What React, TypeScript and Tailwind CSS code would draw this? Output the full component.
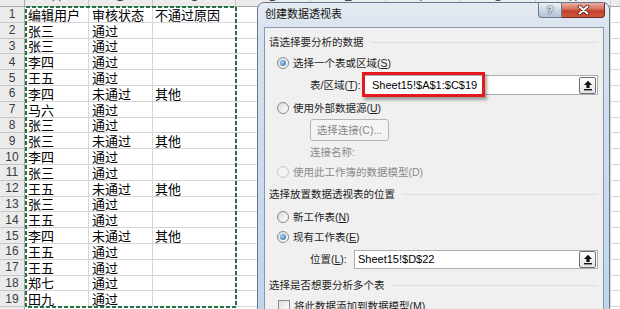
import React from 'react';

const rows: [string, string, string][] = [
  ['编辑用户', '审核状态', '不通过原因'],
  ['张三', '通过', ''],
  ['张三', '通过', ''],
  ['李四', '通过', ''],
  ['王五', '通过', ''],
  ['李四', '未通过', '其他'],
  ['马六', '通过', ''],
  ['张三', '通过', ''],
  ['张三', '未通过', '其他'],
  ['李四', '通过', ''],
  ['张三', '通过', ''],
  ['王五', '未通过', '其他'],
  ['张三', '通过', ''],
  ['王五', '通过', ''],
  ['李四', '未通过', '其他'],
  ['王五', '通过', ''],
  ['王五', '通过', ''],
  ['郑七', '通过', ''],
  ['田九', '通过', ''],
];

const extraCols = ['D', 'E', 'F', 'G', 'H', 'I'];

function Radio({ checked, disabled }: { checked?: boolean; disabled?: boolean }) {
  return (
    <span
      className={`w-[12px] h-[12px] shrink-0 rounded-full border flex items-center justify-center ${
        disabled
          ? 'border-[#c4c4c4] bg-[#f4f4f4]'
          : 'border-[#8a8a8a] bg-[linear-gradient(135deg,#d9d9d9,#ffffff)]'
      }`}
    >
      {checked && (
        <span className="w-[6px] h-[6px] rounded-full bg-[radial-gradient(circle_at_35%_35%,#a9d0f5,#2b5fa5)]" />
      )}
    </span>
  );
}

function Heading({ text, h }: { text: string; h: string }) {
  return (
    <div className={`flex items-center pl-[4px] pr-[5px] ${h}`}>
      <span className="text-[#1e1e1e]">{text}</span>
      <div className="flex-1 h-px bg-[#d5dfe6] ml-[7px]" />
    </div>
  );
}

function Mn({ k }: { k: string }) {
  return (
    <>
      (<span className="underline underline-offset-[1px]">{k}</span>)
    </>
  );
}

function PickButton() {
  return (
    <div className="w-[17px] h-[17px] rounded-[2px] border border-[#6f6f6f] bg-[linear-gradient(180deg,#ffffff,#e3e3e3)] flex items-center justify-center">
      <svg width="10" height="11" viewBox="0 0 10 11">
        <path d="M5 0.8 L9 5 H6.6 V8 H3.4 V5 H1 Z" fill="#111" />
        <rect x="1" y="9" width="8" height="1.4" fill="#111" />
      </svg>
    </div>
  );
}

function Dialog() {
  return (
    <div className="absolute left-[257px] top-[2px] w-[353px] h-[330px] rounded-t-[7px] border border-[#66778b] bg-[linear-gradient(180deg,#e5ebf2_0px,#d6e2ef_30px,#bed4ec_100%)] pl-[6px] pr-[5px] flex flex-col [font-family:'Liberation_Sans','Noto_Sans_CJK_SC',sans-serif]">
      {/* title bar */}
      <div className="h-[24px] flex items-start mr-[-1px]">
        <span className="pt-[4px] pl-[1px] text-[11px] leading-[14px] text-[#111]">创建数据透视表</span>
        <div className="ml-auto flex">
          <div className="w-[24px] h-[15px] rounded-bl-[4px] border border-t-0 border-[#6b7b8d] bg-[linear-gradient(180deg,#eef2f7,#c9d5e3_55%,#b3c3d6)] flex items-center justify-center text-[11px] leading-none font-bold text-white [text-shadow:0_0_1px_#34465a,0_0_1px_#34465a,0_0_2px_#34465a]">
            ?
          </div>
          <div className="w-[43px] h-[15px] rounded-br-[4px] border border-t-0 border-l-0 border-[#6a2a22] bg-[linear-gradient(180deg,#eab0a3,#d56e5b_45%,#c2402b_55%,#d2583d)] flex items-center justify-center">
            <svg width="13" height="10" viewBox="0 0 13 10">
              <path d="M2.5 1.5 L10.5 8.5 M10.5 1.5 L2.5 8.5" stroke="#4a1b15" strokeWidth="3.6" strokeLinecap="round" />
              <path d="M2.5 1.5 L10.5 8.5 M10.5 1.5 L2.5 8.5" stroke="#ffffff" strokeWidth="2" strokeLinecap="round" />
            </svg>
          </div>
        </div>
      </div>

      {/* client area */}
      <div className="flex-1 border border-b-0 border-[#8798ad] bg-[#f0f0f0] pt-[4px] text-[10.5px] leading-[14px] text-[#1e1e1e]">
        <Heading text="请选择要分析的数据" h="h-[20px]" />

        <div className="h-[22px] flex items-center gap-[4px] pl-[12px]">
          <Radio checked />
          <span>
            选择一个表或区域<Mn k="S" />
          </span>
        </div>

        <div className="relative h-[22px] flex items-center pl-[45px] pr-[5px]">
          <span className="w-[54px] shrink-0">
            表/区域<Mn k="T" />:
          </span>
          <div className="flex-1 h-[20px] border border-[#abadb3] bg-white flex items-center pl-[7px] pr-[1px]">
            <span className="text-[11px] text-black">Sheet15!$A$1:$C$19</span>
            <div className="ml-auto">
              <PickButton />
            </div>
          </div>
          <div className="absolute left-[97px] top-[-2px] w-[123px] h-[25px] border-[3px] border-[#e3191b] shadow-[2px_3px_3px_rgba(0,0,0,0.35)]" />
        </div>

        <div className="h-[23px] flex items-center gap-[4px] pl-[12px]">
          <Radio />
          <span>
            使用外部数据源<Mn k="U" />
          </span>
        </div>

        <div className="h-[22px] flex items-center pl-[45px]">
          <div className="w-[79px] h-[22px] rounded-[3px] border border-[#b3b6b9] bg-[#f4f4f4] flex items-center justify-center text-[#878787]">
            选择连接(C)...
          </div>
        </div>

        <div className="h-[21px] flex items-center pl-[45px] text-[#8a8a8a]">连接名称:</div>

        <div className="h-[19px] flex items-center gap-[4px] pl-[12px] text-[#8a8a8a]">
          <Radio disabled />
          <span>使用此工作簿的数据模型(D)</span>
        </div>

        <Heading text="选择放置数据透视表的位置" h="h-[26px]" />

        <div className="h-[20px] flex items-center gap-[4px] pl-[12px]">
          <Radio />
          <span>
            新工作表<Mn k="N" />
          </span>
        </div>

        <div className="h-[20px] flex items-center gap-[4px] pl-[12px]">
          <Radio checked />
          <span>
            现有工作表<Mn k="E" />
          </span>
        </div>

        <div className="h-[24px] flex items-center pl-[45px] pr-[5px]">
          <span className="w-[44px] shrink-0">
            位置<Mn k="L" />:
          </span>
          <div className="flex-1 h-[19px] border border-[#abadb3] bg-white flex items-center pl-[3px] pr-[1px]">
            <span className="text-[11px] text-black">Sheet15!$D$22</span>
            <div className="ml-auto">
              <PickButton />
            </div>
          </div>
        </div>

        <Heading text="选择是否想要分析多个表" h="h-[28px]" />

        <div className="h-[14px] flex items-center gap-[4px] pl-[13px]">
          <span className="w-[12px] h-[12px] shrink-0 border border-[#8a8a8a] bg-[linear-gradient(135deg,#dcdcdc,#ffffff)]" />
          <span>
            将此数据添加到数据模型<Mn k="M" />
          </span>
        </div>
      </div>
    </div>
  );
}

export default function App() {
  return (
    <div className="relative w-[620px] h-[309px] overflow-hidden bg-white">
      {/* column header row, mostly scrolled off the top */}
      <div className="mt-[-13px] h-[20px] flex border-b border-[#a9a9a9] bg-[#ececec] text-[12px] text-[#444] [font-family:'Liberation_Sans',sans-serif]">
        <div className="w-[25px] shrink-0 border-r border-[#a9a9a9]" />
        {[
          ['A', 'w-[64px]'],
          ['B', 'w-[64px]'],
          ['C', 'w-[83px]'],
        ].map(([l, w]) => (
          <div key={l} className={`${w} shrink-0 border-r border-[#c8c8c8] flex items-center justify-center`}>
            {l}
          </div>
        ))}
        {extraCols.map((l) => (
          <div key={l} className="w-[75px] shrink-0 border-r border-[#c8c8c8] flex items-center justify-center">
            {l}
          </div>
        ))}
      </div>

      {rows.map((r, i) => (
        <div key={i} className="h-[15.8px] flex">
          <div className="w-[25px] shrink-0 bg-[#ebebeb] border-r border-b border-r-[#a9a9a9] border-b-[#c6c6c6] flex items-center justify-center text-[12px] text-[#3c3c3c] [font-family:'Liberation_Sans',sans-serif]">
            {i + 1}
          </div>
          {r.map((c, j) => (
            <div
              key={j}
              className={`${j === 2 ? 'w-[83px] pl-[2px]' : 'w-[64px] pl-[3px]'} shrink-0 border-r border-b border-[#d6d6d6] flex items-center text-[13px] leading-none text-black [font-family:'Noto_Sans_CJK_SC',sans-serif] whitespace-nowrap overflow-hidden`}
            >
              {c}
            </div>
          ))}
          {extraCols.map((l) => (
            <div key={l} className="w-[75px] shrink-0 border-r border-b border-[#d6d6d6]" />
          ))}
        </div>
      ))}
      <div className="h-[15.8px] flex">
        <div className="w-[25px] shrink-0 bg-[#ebebeb] border-r border-[#a9a9a9]" />
      </div>

      {/* marching ants around A1:C19 */}
      <svg className="absolute left-[25px] top-[6px]" width="212" height="302">
        <rect x="1" y="1" width="210" height="300" fill="none" stroke="#217346" strokeWidth="2" strokeDasharray="4 2" />
      </svg>

      <Dialog />
    </div>
  );
}
